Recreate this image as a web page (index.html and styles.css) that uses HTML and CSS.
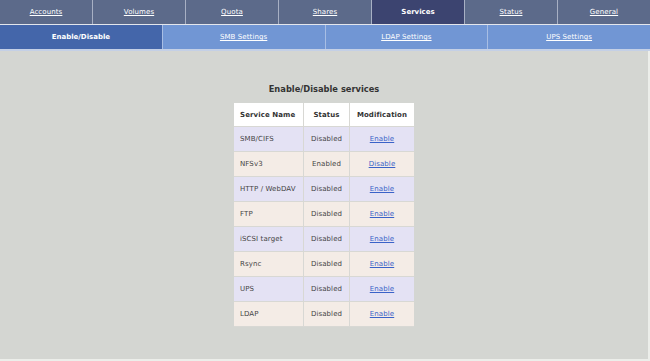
FILE: index.html
```html
<!DOCTYPE html>
<html lang="en">

<head>
    <meta charset="UTF-8">
    <title>Services</title>
    <link rel="stylesheet" href="styles.css">
</head>

<body>
    <ul class="menu">
        <li><a href="#">Accounts</a></li>
        <li><a href="#">Volumes</a></li>
        <li><a href="#">Quota</a></li>
        <li><a href="#">Shares</a></li>
        <li class="menu_active"><span>Services</span></li>
        <li><a href="#">Status</a></li>
        <li><a href="#">General</a></li>
    </ul>
    <ul class="submenu">
        <li class="submenu_active"><span>Enable/Disable</span></li>
        <li><a href="#">SMB Settings</a></li>
        <li><a href="#">LDAP Settings</a></li>
        <li><a href="#">UPS Settings</a></li>
    </ul>

    <div id="content">
        <h1 class="title">Enable/Disable services</h1>
        <table class="services">
            <tr class="head">
                <th class="name">Service Name</th>
                <th class="status">Status</th>
                <th class="mod">Modification</th>
            </tr>
            <tr class="odd">
                <td>SMB/CIFS</td>
                <td class="status">Disabled</td>
                <td class="mod"><a href="#">Enable</a></td>
            </tr>
            <tr class="even">
                <td>NFSv3</td>
                <td class="status">Enabled</td>
                <td class="mod"><a href="#">Disable</a></td>
            </tr>
            <tr class="odd">
                <td>HTTP / WebDAV</td>
                <td class="status">Disabled</td>
                <td class="mod"><a href="#">Enable</a></td>
            </tr>
            <tr class="even">
                <td>FTP</td>
                <td class="status">Disabled</td>
                <td class="mod"><a href="#">Enable</a></td>
            </tr>
            <tr class="odd">
                <td>iSCSI target</td>
                <td class="status">Disabled</td>
                <td class="mod"><a href="#">Enable</a></td>
            </tr>
            <tr class="even">
                <td>Rsync</td>
                <td class="status">Disabled</td>
                <td class="mod"><a href="#">Enable</a></td>
            </tr>
            <tr class="odd">
                <td>UPS</td>
                <td class="status">Disabled</td>
                <td class="mod"><a href="#">Enable</a></td>
            </tr>
            <tr class="even">
                <td>LDAP</td>
                <td class="status">Disabled</td>
                <td class="mod"><a href="#">Enable</a></td>
            </tr>
        </table>
    </div>
</body>

</html>
```

FILE: styles.css
```css
html,
body {
    margin: 0;
    padding: 0;
    background: #eceeea;
    font-family: "DejaVu Sans", Verdana, sans-serif;
    font-size: 7px;
}

/* top menu */
.menu,
.submenu {
    display: flex;
    list-style: none;
    margin: 0;
    padding: 0;
}

.menu {
    height: 24px;
    background: #5c6a8a;
    border-bottom: 1px solid #e4e6ec;
}

.menu li,
.submenu li {
    flex: 1;
    display: flex;
    align-items: center;
    justify-content: center;
    border-right: 1px solid #a8b0c4;
}

.menu li:last-child,
.submenu li:last-child {
    border-right: none;
}

.menu a,
.submenu a {
    color: #fff;
    letter-spacing: 0.1px;
}

.menu .menu_active {
    background: #3c4470;
    color: #fff;
    font-weight: bold;
}

.submenu {
    height: 24px;
    background: #7196d4;
    border-bottom: 2px solid #c4d0e6;
}

.submenu li {
    border-right-color: #a8bee4;
}

.submenu .submenu_active {
    background: #4466aa;
    color: #fff;
    font-weight: bold;
}

/* content */
#content {
    height: 308px;
    margin-right: 2px;
    padding-top: 33px;
    background: #d4d6d2;
    box-sizing: border-box;
}

.title {
    margin: 0 0 9px;
    text-align: center;
    font-size: 8.3px;
    color: #333;
}

.services {
    margin: 0 auto;
    border-spacing: 0;
    color: #444;
    table-layout: fixed;
    width: 180px;
    letter-spacing: 0.1px;
}

.services th,
.services td {
    height: 25px;
    padding: 0 0 0 6px;
    text-align: left;
    border: 1px solid #d8d8d4;
    border-width: 0 1px 1px 0;
    box-sizing: border-box;
    white-space: nowrap;
}

.services th {
    height: 24px;
    background: #fff;
    color: #333;
}

.services .name {
    width: 70px;
}

.services .status {
    width: 46px;
    text-align: center;
    padding: 0;
}

.services .mod {
    text-align: center;
    padding: 0;
    border-right: none;
}

.services .odd td {
    background: #e4e2f4;
}

.services .even td {
    background: #f4ece6;
}

.services a {
    color: #3a62c8;
}
```
